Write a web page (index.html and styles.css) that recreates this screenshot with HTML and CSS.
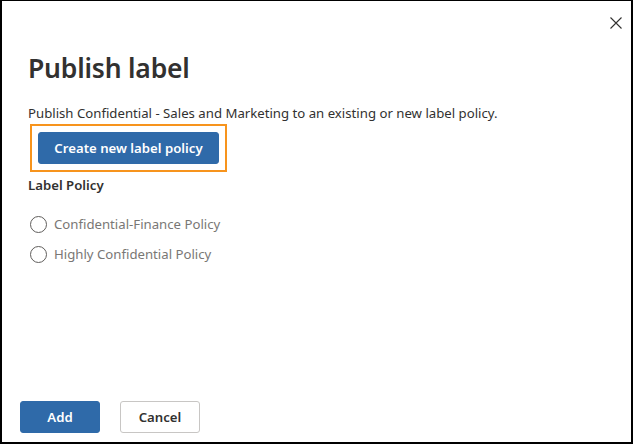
FILE: index.html
```html
<!DOCTYPE html>
<html>
<head>
  <title>Publish label</title>
  <link rel="stylesheet" href="styles.css">
</head>
<body>
  <div class="dialog">
    <button type="button" class="close" aria-label="Close">
      <svg width="12" height="12" viewBox="0 0 12 12">
        <path d="M0.5 0.5 L11.5 11.5 M11.5 0.5 L0.5 11.5" stroke="#323130" stroke-width="1.1" fill="none"/>
      </svg>
    </button>

    <h1>Publish label</h1>
    <p class="intro">Publish Confidential - Sales and Marketing to an existing or new label policy.</p>

    <div class="highlight">
      <button type="button" class="btn primary wide">Create new label policy</button>
    </div>

    <div class="field-label">Label Policy</div>

    <ul class="options">
      <li><span class="radio"></span>Confidential-Finance Policy</li>
      <li><span class="radio"></span>Highly Confidential Policy</li>
    </ul>

    <div class="footer">
      <button type="button" class="btn primary">Add</button>
      <button type="button" class="btn">Cancel</button>
    </div>
  </div>
</body>
</html>
```

FILE: styles.css
```css
body {
  margin: 0;
  font-family: "Noto Sans", "Open Sans", sans-serif;
  color: #323130;
  background-color: #ffffff;
}

.dialog {
  position: relative;
  box-sizing: border-box;
  width: 633px;
  height: 444px;
  border: 1px solid #000000;
  border-left-width: 2px;
  border-right-width: 2px;
  border-bottom-width: 2px;
  padding: 0 0 0 26px;
  display: flex;
  flex-direction: column;
}

.close {
  position: absolute;
  top: 16px;
  right: 9px;
  padding: 0;
  border: none;
  background: none;
  width: 12px;
  height: 12px;
  line-height: 0;
}

h1 {
  margin: 49px 0 0 0;
  font-size: 26.5px;
  font-weight: 600;
  line-height: 36px;
  letter-spacing: -0.2px;
}

.intro {
  margin: 17px 0 0 0;
  font-size: 13.2px;
  line-height: 20px;
}

.highlight {
  align-self: flex-start;
  margin: 1px 0 0 2px;
  border: 2px solid #f7941d;
  padding: 6px;
}

.btn {
  font-family: inherit;
  font-size: 13.2px;
  font-weight: 600;
  height: 32px;
  width: 80px;
  border-radius: 3px;
  border: 1px solid #c8c6c4;
  background-color: #ffffff;
  color: #323130;
  padding: 0;
}

.btn.primary {
  background-color: #2f6aa9;
  border-color: #2f6aa9;
  color: #ffffff;
}

.btn.wide {
  width: 181px;
}

.field-label {
  margin: 3px 0 0 0;
  font-size: 13.2px;
  font-weight: 600;
  line-height: 20px;
}

.options {
  list-style: none;
  margin: 14px 0 0 0;
  padding: 0;
}

.options li {
  display: flex;
  align-items: center;
  height: 30px;
  font-size: 13.2px;
  color: #797775;
}

.radio {
  box-sizing: border-box;
  width: 17px;
  height: 17px;
  margin: 0 7px 0 2px;
  border: 1px solid #605e5c;
  border-radius: 50%;
}

.footer {
  margin-top: auto;
  margin-left: -8px;
  margin-bottom: 9px;
  display: flex;
  gap: 20px;
}
```
